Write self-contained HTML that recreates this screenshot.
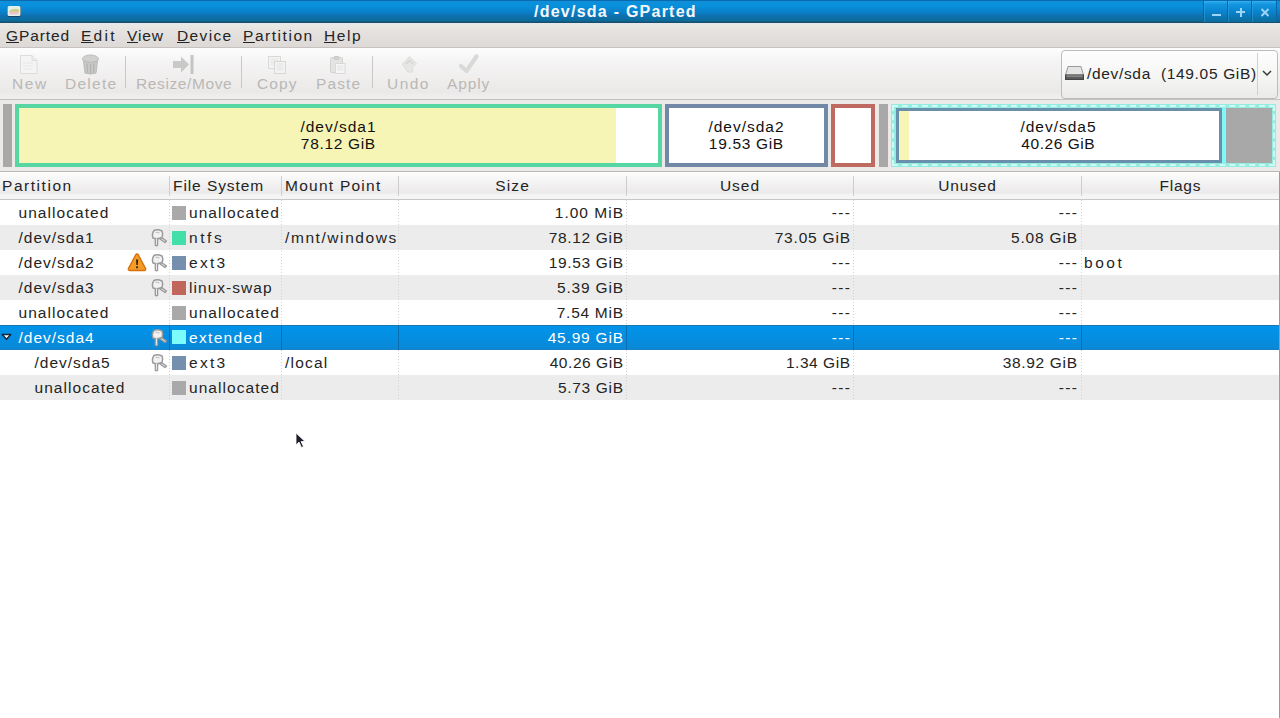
<!DOCTYPE html>
<html><head><meta charset="utf-8">
<style>
*{margin:0;padding:0;box-sizing:border-box}
html,body{width:1280px;height:718px;overflow:hidden;background:#fff}
body{position:relative;font-family:"Liberation Sans",sans-serif;font-size:15.5px;color:#242424}
.a{position:absolute;white-space:nowrap}
.tx{line-height:18px}
u{text-decoration:underline;text-underline-offset:1px;text-decoration-thickness:1px}
#title{left:0;top:0;width:1280px;height:23px;background:linear-gradient(#0a6aae 0,#0a6aae 1px,#0f90d8 1px,#0890dc 6px,#0a80c8 12px,#0f70b0 16px,#0a6c98 21px,#1a4e6a 22px,#1a4e6a 23px)}
.wb{top:1px;width:24px;height:21px;border-left:1px solid #0a64a0;box-shadow:inset 1px 0 0 rgba(80,180,240,.35);background:linear-gradient(#36b0f2,#1496e0 3px,#0a88d4 9px,#0a78b8 15px,#0a6c9a 21px)}
#menubar{left:0;top:23px;width:1280px;height:25px;background:linear-gradient(#e2e8f2 0,#e9e8e5 2px,#e4e1df 10px,#dcd9d7 24px);border-bottom:1px solid #c6c2c0}
#toolbar{left:0;top:48px;width:1280px;height:52px;background:linear-gradient(#fdfdfd 0,#f5f4f4 14px,#ebe9e8 44px,#efeded 48px,#efeded 51px);border-bottom:1px solid #c4c2c0}
.tl{color:#b9b8b6}
.sep{width:1px;top:56px;height:32px;background:#c9c8c6}
#combo{left:1061px;top:50px;width:217px;height:49px;border:1px solid #bebcba;border-radius:4px;background:linear-gradient(#fefefe,#f4f4f3 60%,#ebeae9)}
#graph{left:0;top:100px;width:1280px;height:72px;background:#eceae9;border-bottom:1px solid #b9b7b5}
.pb{top:104px;height:63px;border:4px solid}
#hdr{left:0;top:172px;width:1280px;height:28px;background:linear-gradient(#fdfdfd 0,#f6f5f5 8px,#ebe9e9 21px,#f3f3f3 22px,#f6f6f6 27px);border-bottom:1px solid #c8c6c5}
.hs{top:176px;width:1px;height:20px;background:#cfcdcb}
.row{left:0;width:1279px;height:25px}
.g{background:#ececec}
.sel{background:linear-gradient(#0094ea,#0a88d8);border-top:1px solid #1a78ae;border-bottom:1px solid #1a82c2}
.dl{top:200px;width:1px;height:200px;background:repeating-linear-gradient(#d2d2d2 0 1px,transparent 1px 3px)}
.sw{width:14px;height:14px}
#rb{left:1279px;top:172px;width:1px;height:546px;background:#9d9b99}
</style></head><body>
<svg width="0" height="0" style="position:absolute">
 <defs>
  <g id="keyi">
   <path d="M12.5 9.5 L17.5 13 L16 14.5 L11 11" fill="#e4e4e4" stroke="#9a9a9a" stroke-width="1.3" stroke-linejoin="round"/>
   <path d="M5 2.5 Q8.5 1 13 3 Q14.5 6.5 13 9.5 Q8.5 11.5 4 10 Q2.5 6 5 2.5 Z" fill="#f2f2f2" stroke="#9a9a9a" stroke-width="1.5" stroke-linejoin="round"/>
   <path d="M6.5 4.5 Q8.5 4 10.5 5" fill="none" stroke="#c4c4c4" stroke-width="1.2"/>
   <path d="M6.3 10.5 L6.3 17.2 Q7.4 18.3 8.6 17.2 L8.6 10.5" fill="#ececec" stroke="#9a9a9a" stroke-width="1.3"/>
  </g>
  <g id="warni">
   
   <path d="M10 2 Q10.8 2 11.3 2.9 L18.6 16.6 Q19.2 18.3 17.4 18.5 L2.6 18.5 Q0.8 18.3 1.4 16.6 L8.7 2.9 Q9.2 2 10 2 Z" fill="#f39c28" stroke="#d8700c" stroke-width="1.3"/>
   <path d="M9 7.5 L11.2 7.5 L10.8 13 L9.4 13 Z" fill="#3a2408"/>
   <rect x="9.1" y="14.3" width="2" height="2" rx="0.6" fill="#3a2408"/>
  </g>
 </defs>
</svg>

<div id="title" class="a"></div>
<svg class="a" style="left:6px;top:5px" width="16" height="13" viewBox="0 0 16 13"><rect x="1" y="1" width="14" height="11" rx="2" fill="#1b4660"/><rect x="1.5" y="1" width="13" height="10" rx="1.5" fill="#dff0ee"/><path d="M3 6.5 Q6 2.5 13 4.5 L13 7 L3 7 Z" fill="#c9cf86"/><rect x="3.5" y="6.5" width="9" height="3" fill="#ecc4c4"/></svg>
<div class="a tx " style="top:3px;letter-spacing:1.24px;font-size:16px;font-weight:bold;color:#f4f8fb;left:534px;">/dev/sda - GParted</div>
<div class="a wb" style="left:1203px"></div>
<div class="a wb" style="left:1227px"></div>
<div class="a wb" style="left:1251px;border-right:1px solid #0b66a2;width:26px"></div>
<div class="a" style="left:1212px;top:14px;width:9px;height:2px;background:#9cd6f6"></div>
<div class="a" style="left:1236px;top:11px;width:9px;height:2px;background:#9cd6f6"></div>
<div class="a" style="left:1239.5px;top:8px;width:2px;height:9px;background:#9cd6f6"></div>
<svg class="a" style="left:1260px;top:8px" width="10" height="9"><path d="M1.5 1 L8.5 8 M8.5 1 L1.5 8" stroke="#9cd6f6" stroke-width="2"/></svg>

<div id="menubar" class="a"></div>
<div class="a tx " style="top:27px;letter-spacing:0.89px;left:6px;"><u>G</u>Parted</div>
<div class="a tx " style="top:27px;letter-spacing:2.26px;left:81px;"><u>E</u>dit</div>
<div class="a tx " style="top:27px;letter-spacing:0.87px;left:127px;"><u>V</u>iew</div>
<div class="a tx " style="top:27px;letter-spacing:1.37px;left:177px;"><u>D</u>evice</div>
<div class="a tx " style="top:27px;letter-spacing:1.54px;left:243px;"><u>P</u>artition</div>
<div class="a tx " style="top:27px;letter-spacing:1.56px;left:324px;"><u>H</u>elp</div>

<div id="toolbar" class="a"></div>
<svg class="a" style="left:19px;top:54px" width="20" height="21"><path d="M1.5 1.5 L13 1.5 L18 6.5 L18 19.5 L1.5 19.5 Z" fill="#f4f4f4" stroke="#dcdcdb"/><path d="M13 1.5 L13 6.5 L18 6.5" fill="#ececeb" stroke="#dcdcdb"/><path d="M4 9h10M4 12h10M4 15h10" stroke="#e6e6e5"/></svg>
<svg class="a" style="left:81px;top:54px" width="19" height="21"><ellipse cx="9.5" cy="5" rx="8" ry="4" fill="#d0d0cf" stroke="#bdbdbc"/><path d="M2.5 7 L4 19 Q9.5 21 15 19 L16.5 7 Q9.5 10 2.5 7Z" fill="#c8c8c7" stroke="#bababa"/><path d="M6 9.5 L6.5 18.5 M9.5 10 L9.5 19 M13 9.5 L12.5 18.5" stroke="#b0b0af"/></svg>
<div class="a sep" style="left:125px"></div>
<svg class="a" style="left:172px;top:55px" width="23" height="19"><path d="M1 6 L9 6 L9 1.5 L17 9.5 L9 17.5 L9 13 L1 13 Z" fill="#c9c9c8"/><rect x="18.5" y="0" width="3" height="19" fill="#c4c4c3"/></svg>
<div class="a sep" style="left:241px"></div>
<svg class="a" style="left:268px;top:56px" width="19" height="18"><rect x="0.5" y="0.5" width="12" height="12" fill="#f4f4f4" stroke="#d9d9d8"/><path d="M2.5 3h8M2.5 5h8M2.5 7h8M2.5 9h8" stroke="#e4e4e3"/><rect x="6.5" y="5.5" width="11" height="12" fill="#f4f4f4" stroke="#d6d6d5"/><path d="M8.5 8h7M8.5 10h7M8.5 12h7M8.5 14h7" stroke="#e2e2e1"/></svg>
<svg class="a" style="left:330px;top:56px" width="16" height="18"><rect x="0.5" y="1.5" width="12" height="15" rx="1" fill="#e4e4e3" stroke="#d2d2d1"/><rect x="4" y="0.5" width="5" height="3" rx="1" fill="#d4d4d3" stroke="#c8c8c7"/><rect x="5.5" y="7.5" width="9.5" height="10" fill="#f6f6f6" stroke="#dadad9"/><path d="M7 10h6.5M7 12h6.5M7 14h6.5" stroke="#e2e2e1"/></svg>
<div class="a sep" style="left:372px"></div>
<svg class="a" style="left:400px;top:55px" width="19" height="19"><path d="M9.5 1.5 L16.5 8.5 L12.5 12.5 L12.5 17 L8 17 L2.5 9.5 Z" fill="#e6e6e5" stroke="#dcdcdb" stroke-linejoin="round"/><path d="M6 9 L9.5 5.5 L13 9" fill="none" stroke="#d6d6d5" stroke-width="1.3"/></svg>
<svg class="a" style="left:458px;top:53px" width="22" height="21"><path d="M3 13 L8.5 18 L18.5 3.5" fill="none" stroke="#d9d9d8" stroke-width="4.2" stroke-linecap="round" stroke-linejoin="round"/></svg>
<div class="a tx tl" style="top:75px;letter-spacing:1.58px;left:12px;">New</div>
<div class="a tx tl" style="top:75px;letter-spacing:1.27px;left:65px;">Delete</div>
<div class="a tx tl" style="top:75px;letter-spacing:0.61px;left:136px;">Resize/Move</div>
<div class="a tx tl" style="top:75px;letter-spacing:1.09px;left:257px;">Copy</div>
<div class="a tx tl" style="top:75px;letter-spacing:1.12px;left:316px;">Paste</div>
<div class="a tx tl" style="top:75px;letter-spacing:1.48px;left:387px;">Undo</div>
<div class="a tx tl" style="top:75px;letter-spacing:0.90px;left:447px;">Apply</div>

<div id="combo" class="a"></div>
<svg class="a" style="left:1065px;top:65px" width="20" height="16"><path d="M3 1.5 L16 1.5 L18.5 10 L0.5 10 Z" fill="#e4e4e4" stroke="#9a9a9a"/><rect x="0.5" y="10" width="18" height="4.5" fill="#5a5a5a" stroke="#444"/><rect x="1.5" y="10.5" width="16" height="1.2" fill="#9a9a9a"/></svg>
<div class="a tx " style="top:65px;letter-spacing:0.67px;left:1087px;">/dev/sda&nbsp; (149.05 GiB)</div>
<div class="a" style="left:1257px;top:53px;width:1px;height:42px;background:#d2d0ce"></div>
<svg class="a" style="left:1262px;top:70px" width="10" height="7"><path d="M1 1 L5 5 L9 1" fill="none" stroke="#3a3a3a" stroke-width="1.5"/></svg>

<div id="graph" class="a"></div>
<div class="a" style="left:3px;top:104px;width:9px;height:63px;background:#a9a8a8"></div>
<div class="a pb" style="left:15px;width:647px;border-color:#55d6a2;background:linear-gradient(90deg,#f6f5b6 0,#f6f5b6 597px,#fff 597px)"></div>
<div class="a pb" style="left:665px;width:163px;border-color:#7188a6;background:#fff"></div>
<div class="a pb" style="left:831px;width:44px;border-color:#bf6a60;background:#fff"></div>
<div class="a" style="left:879px;top:104px;width:9px;height:63px;background:#a9a8a8"></div>
<div class="a" style="left:891px;top:104px;width:385px;height:63px;border:4px solid #92ecdf;background:#92ecdf"></div>
<div class="a" style="left:892px;top:105px;width:383px;height:61px;border:2px dashed #cffaf3"></div>
<div class="a" style="left:1222px;top:108px;width:4px;height:55px;background:#7ff8f8"></div>
<div class="a pb" style="left:896px;top:108px;width:326px;height:55px;border-width:3px;border-color:#6a8faa;background:linear-gradient(90deg,#f6f5b6 0,#f6f5b6 10px,#fff 10px)"></div>
<div class="a" style="left:1226px;top:108px;width:46px;height:55px;background:#a9a8a8"></div>
<div class="a tx " style="top:118px;letter-spacing:0.99px;color:#111;left:300.43px;">/dev/sda1</div>
<div class="a tx " style="top:135px;letter-spacing:0.67px;color:#111;left:300.85px;">78.12 GiB</div>
<div class="a tx " style="top:118px;letter-spacing:0.99px;color:#111;left:708.43px;">/dev/sda2</div>
<div class="a tx " style="top:135px;letter-spacing:0.67px;color:#111;left:708.85px;">19.53 GiB</div>
<div class="a tx " style="top:118px;letter-spacing:0.99px;color:#111;left:1020.43px;">/dev/sda5</div>
<div class="a tx " style="top:135px;letter-spacing:0.55px;color:#111;left:1021.35px;">40.26 GiB</div>

<div id="hdr" class="a"></div>
<div class="a hs" style="left:169px"></div>
<div class="a hs" style="left:281px"></div>
<div class="a hs" style="left:398px"></div>
<div class="a hs" style="left:626px"></div>
<div class="a hs" style="left:853px"></div>
<div class="a hs" style="left:1081px"></div>
<div class="a tx " style="top:177px;letter-spacing:1.54px;left:2px;">Partition</div>
<div class="a tx " style="top:177px;letter-spacing:0.92px;left:173px;">File System</div>
<div class="a tx " style="top:177px;letter-spacing:1.25px;left:285px;">Mount Point</div>
<div class="a tx " style="top:177px;letter-spacing:1.16px;left:495.19px;">Size</div>
<div class="a tx " style="top:177px;letter-spacing:0.97px;left:719.96px;">Used</div>
<div class="a tx " style="top:177px;letter-spacing:0.82px;left:938.25px;">Unused</div>
<div class="a tx " style="top:177px;letter-spacing:0.74px;left:1159.58px;">Flags</div>

<div class="a row " style="top:200px"></div>
<div class="a tx " style="top:204px;letter-spacing:1.05px;left:18.5px;">unallocated</div>
<div class="a sw" style="left:172px;top:206px;background:#a9a9a9"></div>
<div class="a tx " style="top:204px;letter-spacing:1.05px;left:189px;">unallocated</div>
<div class="a tx " style="top:204px;letter-spacing:1.01px;left:554.75px;">1.00 MiB</div>
<div class="a tx " style="top:204px;letter-spacing:1.38px;left:831.75px;">---</div>
<div class="a tx " style="top:204px;letter-spacing:1.38px;left:1058.75px;">---</div>
<div class="a row g" style="top:225px"></div>
<div class="a tx " style="top:229px;letter-spacing:0.99px;left:18.5px;">/dev/sda1</div>
<svg class="a" style="left:149px;top:228px" width="19" height="19"><use href="#keyi"/></svg>
<div class="a sw" style="left:172px;top:231px;background:#42e0a8"></div>
<div class="a tx " style="top:229px;letter-spacing:2.55px;left:189px;">ntfs</div>
<div class="a tx " style="top:229px;letter-spacing:1.58px;left:285px;">/mnt/windows</div>
<div class="a tx " style="top:229px;letter-spacing:0.67px;left:548.69px;">78.12 GiB</div>
<div class="a tx " style="top:229px;letter-spacing:0.80px;left:774.69px;">73.05 GiB</div>
<div class="a tx " style="top:229px;letter-spacing:0.82px;left:1010.98px;">5.08 GiB</div>
<div class="a row " style="top:250px"></div>
<div class="a tx " style="top:254px;letter-spacing:0.99px;left:18.5px;">/dev/sda2</div>
<svg class="a" style="left:127px;top:252px" width="20" height="20"><use href="#warni"/></svg>
<svg class="a" style="left:149px;top:253px" width="19" height="19"><use href="#keyi"/></svg>
<div class="a sw" style="left:172px;top:256px;background:#7590ae"></div>
<div class="a tx " style="top:254px;letter-spacing:2.31px;left:189px;">ext3</div>
<div class="a tx " style="top:254px;letter-spacing:0.67px;left:548.69px;">19.53 GiB</div>
<div class="a tx " style="top:254px;letter-spacing:1.38px;left:831.75px;">---</div>
<div class="a tx " style="top:254px;letter-spacing:1.38px;left:1058.75px;">---</div>
<div class="a tx " style="top:254px;letter-spacing:2.55px;left:1084px;">boot</div>
<div class="a row g" style="top:275px"></div>
<div class="a tx " style="top:279px;letter-spacing:0.99px;left:18.5px;">/dev/sda3</div>
<svg class="a" style="left:149px;top:278px" width="19" height="19"><use href="#keyi"/></svg>
<div class="a sw" style="left:172px;top:281px;background:#c1665a"></div>
<div class="a tx " style="top:279px;letter-spacing:1.04px;left:189px;">linux-swap</div>
<div class="a tx " style="top:279px;letter-spacing:0.82px;left:556.98px;">5.39 GiB</div>
<div class="a tx " style="top:279px;letter-spacing:1.38px;left:831.75px;">---</div>
<div class="a tx " style="top:279px;letter-spacing:1.38px;left:1058.75px;">---</div>
<div class="a row " style="top:300px"></div>
<div class="a tx " style="top:304px;letter-spacing:1.05px;left:18.5px;">unallocated</div>
<div class="a sw" style="left:172px;top:306px;background:#a9a9a9"></div>
<div class="a tx " style="top:304px;letter-spacing:1.05px;left:189px;">unallocated</div>
<div class="a tx " style="top:304px;letter-spacing:0.73px;left:556.75px;">7.54 MiB</div>
<div class="a tx " style="top:304px;letter-spacing:1.38px;left:831.75px;">---</div>
<div class="a tx " style="top:304px;letter-spacing:1.38px;left:1058.75px;">---</div>
<div class="a row sel" style="top:325px"></div>
<svg class="a" style="left:1px;top:333px" width="11" height="8" viewBox="0 0 11 8"><path d="M1.2 1.5 L9.8 1.5 L5.5 6.3 Z" fill="#fff" stroke="#14283a" stroke-width="1.5" stroke-linejoin="round"/></svg>
<div class="a tx " style="top:329px;letter-spacing:0.99px;color:#fff;left:18.5px;">/dev/sda4</div>
<svg class="a" style="left:149px;top:328px" width="19" height="19"><use href="#keyi"/></svg>
<div class="a sw" style="left:172px;top:330px;background:#7dfcfe"></div>
<div class="a tx " style="top:329px;letter-spacing:1.32px;color:#fff;left:189px;">extended</div>
<div class="a tx " style="top:329px;letter-spacing:0.80px;color:#fff;left:547.69px;">45.99 GiB</div>
<div class="a tx " style="top:329px;letter-spacing:1.38px;color:#fff;left:831.75px;">---</div>
<div class="a tx " style="top:329px;letter-spacing:1.38px;color:#fff;left:1058.75px;">---</div>
<div class="a row " style="top:350px"></div>
<div class="a tx " style="top:354px;letter-spacing:0.99px;left:34.5px;">/dev/sda5</div>
<svg class="a" style="left:149px;top:353px" width="19" height="19"><use href="#keyi"/></svg>
<div class="a sw" style="left:172px;top:356px;background:#7590ae"></div>
<div class="a tx " style="top:354px;letter-spacing:2.31px;left:189px;">ext3</div>
<div class="a tx " style="top:354px;letter-spacing:1.19px;left:285px;">/local</div>
<div class="a tx " style="top:354px;letter-spacing:0.55px;left:549.69px;">40.26 GiB</div>
<div class="a tx " style="top:354px;letter-spacing:0.53px;left:785.98px;">1.34 GiB</div>
<div class="a tx " style="top:354px;letter-spacing:0.67px;left:1002.69px;">38.92 GiB</div>
<div class="a row g" style="top:375px"></div>
<div class="a tx " style="top:379px;letter-spacing:1.05px;left:34.5px;">unallocated</div>
<div class="a sw" style="left:172px;top:381px;background:#a9a9a9"></div>
<div class="a tx " style="top:379px;letter-spacing:1.05px;left:189px;">unallocated</div>
<div class="a tx " style="top:379px;letter-spacing:0.67px;left:557.98px;">5.73 GiB</div>
<div class="a tx " style="top:379px;letter-spacing:1.38px;left:831.75px;">---</div>
<div class="a tx " style="top:379px;letter-spacing:1.38px;left:1058.75px;">---</div>
<div class="a dl" style="left:169px"></div>
<div class="a dl" style="left:281px"></div>
<div class="a dl" style="left:398px"></div>
<div class="a dl" style="left:626px"></div>
<div class="a dl" style="left:853px"></div>
<div class="a dl" style="left:1081px"></div>
<div class="a" style="left:169px;top:325px;width:1px;height:25px;background:#0b6cb0"></div>
<div class="a" style="left:281px;top:325px;width:1px;height:25px;background:#0b6cb0"></div>
<div class="a" style="left:398px;top:325px;width:1px;height:25px;background:#0b6cb0"></div>
<div class="a" style="left:626px;top:325px;width:1px;height:25px;background:#0b6cb0"></div>
<div class="a" style="left:853px;top:325px;width:1px;height:25px;background:#0b6cb0"></div>
<div class="a" style="left:1081px;top:325px;width:1px;height:25px;background:#0b6cb0"></div>
<div id="rb" class="a"></div>

<svg class="a" style="left:295px;top:432px" width="12" height="18"><path d="M1 1 L1 13 L4 10 L6.5 15.5 L8.5 14.5 L6 9.5 L10 9.5 Z" fill="#1e1e2a" stroke="#fff" stroke-width="0.8"/></svg>
</body></html>
